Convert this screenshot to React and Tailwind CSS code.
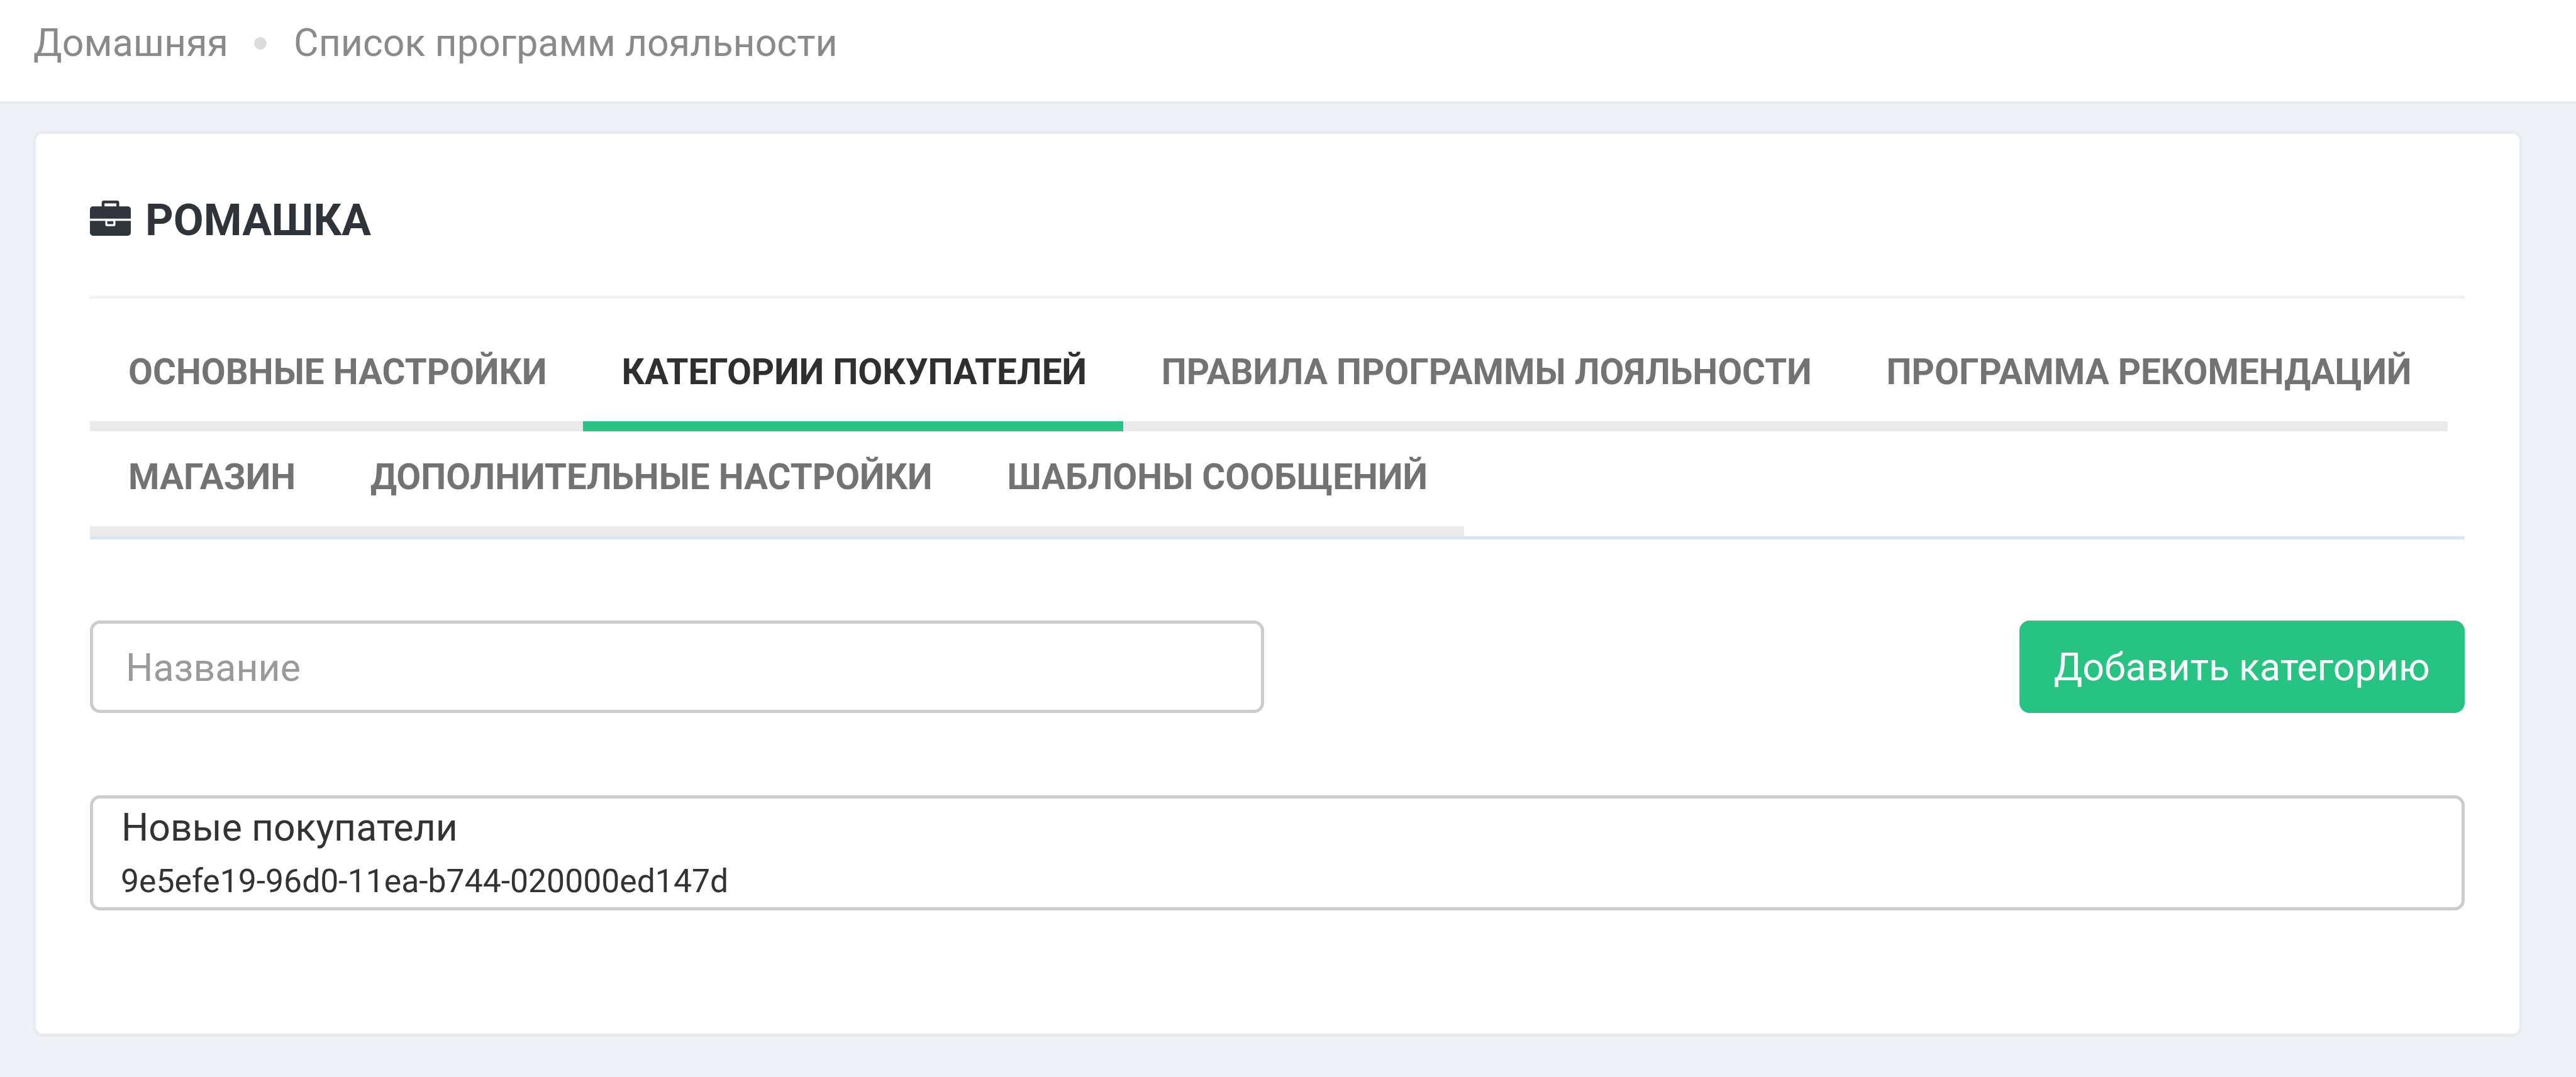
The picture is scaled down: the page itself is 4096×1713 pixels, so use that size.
const tabs1 = [
  ["ОСНОВНЫЕ НАСТРОЙКИ", false],
  ["КАТЕГОРИИ ПОКУПАТЕЛЕЙ", true],
  ["ПРАВИЛА ПРОГРАММЫ ЛОЯЛЬНОСТИ", false],
  ["ПРОГРАММА РЕКОМЕНДАЦИЙ", false],
  ["МАГАЗИН", false],
  ["ДОПОЛНИТЕЛЬНЫЕ НАСТРОЙКИ", false],
  ["ШАБЛОНЫ СООБЩЕНИЙ", false],
];

function Briefcase() {
  return (
    <svg viewBox="198 172 292 251" className="w-[65px] h-[56px] shrink-0 mb-[9px] fill-[#31353c]">
      <path
        fillRule="evenodd"
        d="M282 213V187a15 15 0 0 1 15-15H392a15 15 0 0 1 15 15V213H468a22 22 0 0 1 22 22V301H198V235a22 22 0 0 1 22-22ZM302 192V213H387V192Z"
      />
      <path d="M198 317H308V345a10 10 0 0 0 10 10H370a10 10 0 0 0 10-10V317H490V401a22 22 0 0 1-22 22H220a22 22 0 0 1-22-22Z" />
      <rect x="322" y="319" width="43" height="21" />
    </svg>
  );
}

export default function App() {
  return (
    <div className="min-h-screen w-full bg-[#eef1f6] font-['Roboto',sans-serif]">
      <header className="h-[165.6px] bg-white border-b-[5.33px] border-[#e6eaef] pb-[23px] flex items-center pl-[53px] text-[60.9px] text-[#8a8a8a]">
        <span>Домашняя</span>
        <span className="w-[20px] h-[20px] rounded-full bg-[#dcdcdc] ml-[41px] mr-[43px]" />
        <span>Список программ лояльности</span>
      </header>
      <main className="pt-[42px] pl-[52px] pr-[85.5px]">
        <section className="h-[1441.3px] bg-white border-[5.33px] border-[#e8ecf1] rounded-2xl pl-[86px] pr-[87px]">
          <div className="h-[262px] pt-[20px] flex items-center gap-[23px] border-b-[5.33px] border-[#eff1f4]">
            <Briefcase />
            <h1 className="text-[69.5px] font-bold text-[#2f343a]">РОМАШКА</h1>
          </div>
          <nav className="mt-[44.6px] flex flex-wrap border-b-[5.33px] border-[#dde5ec]">
            {tabs1.map(([label, active]) => (
              <div
                key={label}
                className={
                  active
                    ? "h-[167px] pl-[61px] pr-[57.8px] pb-[5px] flex items-center border-b-[16.7px] border-[#2bc384] text-[56.5px] font-bold text-[#2f2f2f] whitespace-nowrap"
                    : "h-[167px] pl-[61px] pr-[57.8px] pb-[5px] flex items-center border-b-[16.7px] border-[#e9eaec] text-[56.5px] font-bold text-[#737373] whitespace-nowrap"
                }
              >
                {label}
              </div>
            ))}
          </nav>
          <div className="mt-[129px] flex justify-between">
            <input
              readOnly
              placeholder="Название"
              className="w-[1866.6px] h-[147px] border-[5.33px] border-[#cccccc] rounded-2xl pl-[52px] pr-[52px] pt-[4px] text-[60.9px] outline-none placeholder:text-[#9a9a9a]"
            />
            <button className="w-[708px] h-[147px] rounded-2xl bg-[#27c382] pt-[2px] text-white text-[60.9px]">
              Добавить категорию
            </button>
          </div>
          <div className="mt-[131px] h-[183px] border-[5.33px] border-[#cccccc] rounded-2xl pl-[45px] text-[#333333]">
            <div className="text-[60.7px] leading-[75px] mt-[8.6px]">Новые покупатели</div>
            <div className="text-[51.7px] leading-[68px] mt-[14px] -ml-[1px]">9e5efe19-96d0-11ea-b744-020000ed147d</div>
          </div>
        </section>
      </main>
    </div>
  );
}
